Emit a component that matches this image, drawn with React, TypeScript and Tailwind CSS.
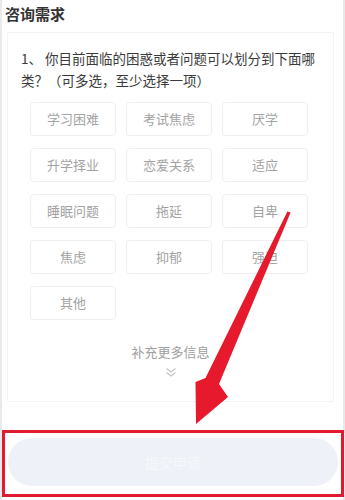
import React from "react";

const options = [
  "学习困难",
  "考试焦虑",
  "厌学",
  "升学择业",
  "恋爱关系",
  "适应",
  "睡眠问题",
  "拖延",
  "自卑",
  "焦虑",
  "抑郁",
  "强迫",
  "其他",
];

export default function App() {
  return (
    <div
      className="relative w-[345px] h-[500px] overflow-hidden bg-white"
      style={{ fontFamily: '"Noto Sans CJK SC", "Noto Sans", sans-serif' }}
    >
      <div className="flex h-full flex-col border-x-2 border-[#e9e9e9]">
        <div className="pl-[3px] pt-[2px] h-[32px] text-[15px] leading-[24px] font-bold text-[#333]">
          咨询需求
        </div>
        <div className="ml-[5px] w-[327px] border border-[#f3f3f3] rounded-[2px] pl-[13px] pt-[14px] pb-[23px]">
          <div className="w-[302px] text-[13.5px] leading-[22px] text-[#3a3a3a]">
            1、 你目前面临的困惑或者问题可以划分到下面哪类？（可多选，至少选择一项）
          </div>
          <div className="mt-[11px] ml-[9px] grid w-[278px] grid-cols-3 gap-x-[10px] gap-y-[12px]">
            {options.map((o) => (
              <div
                key={o}
                className="flex h-[34px] items-center justify-center rounded-[4px] border border-[#efefef] text-[13px] text-[#a3a3a3]"
              >
                {o}
              </div>
            ))}
          </div>
          <div className="mt-[22px] -ml-[13px] flex flex-col items-center">
            <div className="text-[13px] leading-[20px] text-[#9e9e9e]">补充更多信息</div>
            <svg width="12" height="11" viewBox="0 0 12 11" className="mt-[5px]">
              <polyline points="1.5,1.5 6,5 10.5,1.5" fill="none" stroke="#c4c4c4" strokeWidth="1.2" />
              <polyline points="1.5,5.5 6,9 10.5,5.5" fill="none" stroke="#c4c4c4" strokeWidth="1.2" />
            </svg>
          </div>
        </div>
        <div className="mt-[28px] ml-[0px] mr-[-1px] h-[67px] border-[3px] border-[#e11a30] px-[3px] pt-[5px]">
          <div className="flex h-[48px] items-center justify-center rounded-full bg-[#eef1f8] text-[14px] text-[#f7f8fb]">
            提交申请
          </div>
        </div>
      </div>
      <svg
        className="pointer-events-none absolute left-0 top-0"
        width="345"
        height="500"
        viewBox="0 0 345 500"
      >
        <polygon
          points="287.4,211.4 290.6,212.6 219,384 228,397 196,424 195.5,382 205.5,378"
          fill="#e6192d"
        />
      </svg>
    </div>
  );
}
